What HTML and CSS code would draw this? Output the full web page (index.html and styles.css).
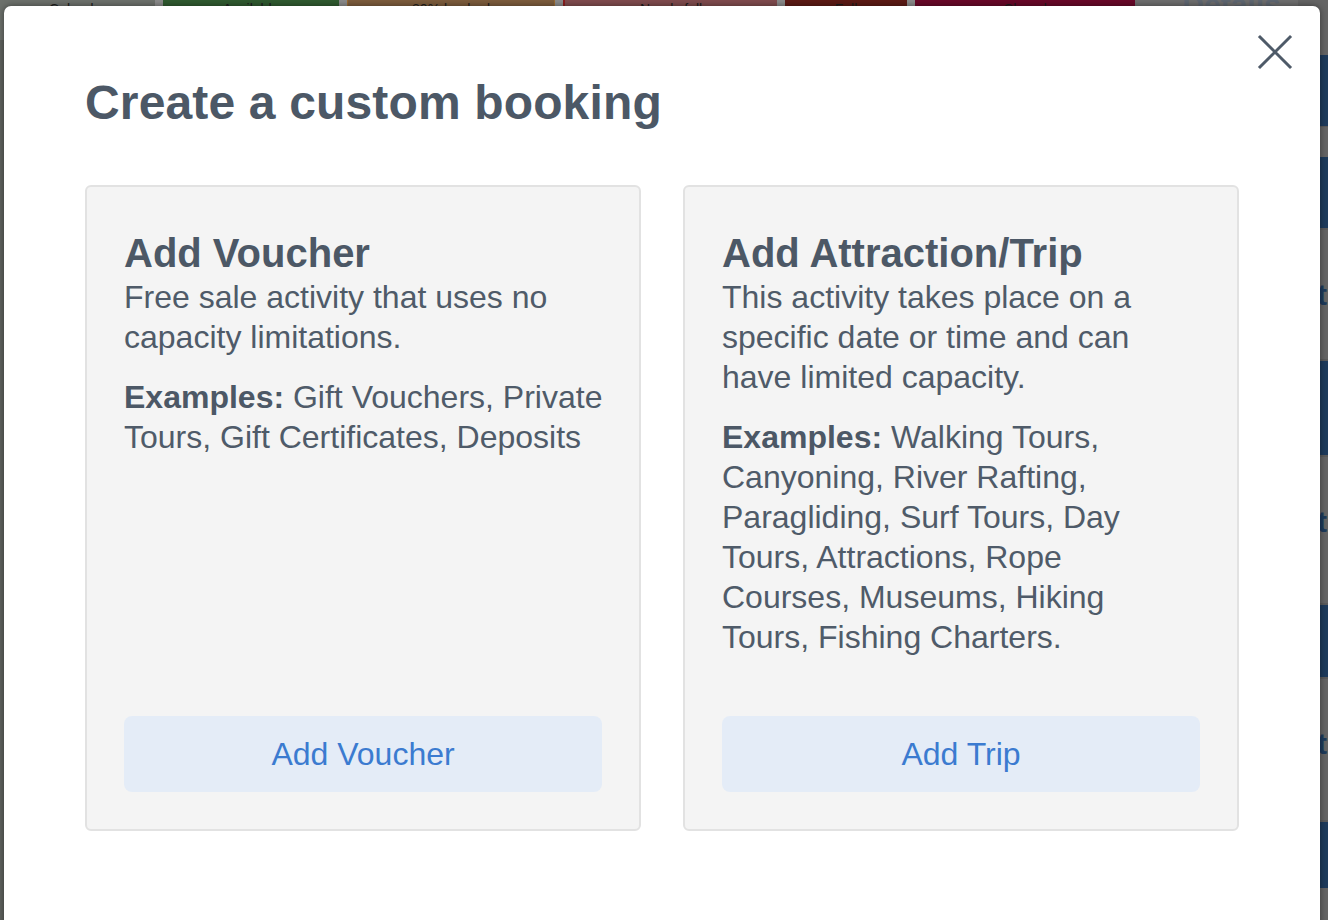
FILE: index.html
```html
<!DOCTYPE html>
<html lang="en">
<head>
<meta charset="utf-8">
<title>Create a custom booking</title>
<link rel="stylesheet" href="styles.css">
</head>
<body>
<div class="page">
  <div class="backdrop">
    <div class="tabs">
      <div class="tab t-grey">Calendar</div>
      <div class="sep"></div>
      <div class="tab t-green">Available</div>
      <div class="sep"></div>
      <div class="tab t-brown">80% booked</div>
      <div class="sep"></div>
      <div class="tab t-pink">Nearly full</div>
      <div class="sep"></div>
      <div class="tab t-red">Full</div>
      <div class="sep"></div>
      <div class="tab t-crimson">Closed</div>
      <div class="tab t-light">Details</div>
    </div>
    <div class="side">
      <div class="row r-grey" style="height:55px"></div>
      <div class="row r-blue" style="height:71px"></div>
      <div class="row r-grey r-line" style="height:31px"></div>
      <div class="row r-blue" style="height:71px"></div>
      <div class="row r-grey r-text" style="height:133px"><span>t</span></div>
      <div class="row r-blue" style="height:94px"></div>
      <div class="row r-grey r-text" style="height:150px"><span>t</span></div>
      <div class="row r-blue" style="height:72px"></div>
      <div class="row r-grey r-text" style="height:145px"><span>t</span></div>
      <div class="row r-blue" style="height:66px"></div>
      <div class="row r-grey" style="height:40px"></div>
    </div>
  </div>

  <div class="modal">
    <button class="close" aria-label="Close">
      <svg width="36" height="36" viewBox="0 0 36 36"><path d="M3 3 L33 33 M33 3 L3 33" stroke="#4e5a68" stroke-width="3" stroke-linecap="square" fill="none"/></svg>
    </button>
    <h1 class="title">Create a custom booking</h1>
    <div class="cards">
      <div class="card">
        <h2 class="card-title">Add Voucher</h2>
        <p class="card-text">Free sale activity that uses no<br>capacity limitations.</p>
        <p class="card-text examples"><b>Examples:</b> Gift Vouchers, Private<br>Tours, Gift Certificates, Deposits</p>
        <button class="card-btn">Add Voucher</button>
      </div>
      <div class="card">
        <h2 class="card-title">Add Attraction/Trip</h2>
        <p class="card-text">This activity takes place on a<br>specific date or time and can<br>have limited capacity.</p>
        <p class="card-text examples"><b>Examples:</b> Walking Tours,<br>Canyoning, River Rafting,<br>Paragliding, Surf Tours, Day<br>Tours, Attractions, Rope<br>Courses, Museums, Hiking<br>Tours, Fishing Charters.</p>
        <button class="card-btn">Add Trip</button>
      </div>
    </div>
  </div>
</div>
</body>
</html>
```

FILE: styles.css
```css
* { box-sizing: border-box; }

html, body {
  margin: 0;
  padding: 0;
  width: 1328px;
  height: 920px;
  overflow: hidden;
  background: #5e615d;
  font-family: "Liberation Sans", Arial, Helvetica, sans-serif;
}

.page {
  position: relative;
  width: 1328px;
  height: 920px;
  overflow: hidden;
}

/* dimmed page behind the modal */
.backdrop {
  position: absolute;
  inset: 0;
  background: #5f625e;
}

.tabs {
  display: flex;
  height: 40px;
  font-size: 14px;
  color: #1c1c1c;
}

.tab {
  height: 40px;
  padding-top: 1px;
  text-align: center;
  overflow: hidden;
  white-space: nowrap;
}

.sep { width: 8px; background: #8a8a8a; }

.t-grey { width: 155px; background: #6c706b; }
.t-green { width: 176px; background: #2f5a2f; }
.t-brown { width: 208px; background: #7c5c3c; border-left: 1px solid #9a6a30; border-right: 1px solid #9a6a30; }
.t-pink { width: 214px; background: #7f4b4d; border-left: 2px solid #8b1e1e; }
.t-red { width: 122px; background: #5c1a15; }
.t-crimson { width: 220px; background: #680828; }
.t-light { flex: 1; background: #6d6d6d; color: #5e6670; font-size: 30px; font-weight: bold; line-height: 10px; padding-top: 0; }

.side {
  position: absolute;
  right: 0;
  top: 0;
  width: 30px;
  display: flex;
  flex-direction: column;
}

.row { width: 30px; position: relative; }
.r-grey { background: #646464; }
.r-blue { background: #1d3a5b; }
.r-line { border-top: 1px solid #585858; }
.r-text { border-top: 2px solid #5a5a5a; border-bottom: 2px solid #5a5a5a; }
.r-text span {
  position: absolute;
  left: 19px;
  top: 50px;
  font-size: 30px;
  font-weight: bold;
  color: #1d3a5b;
  line-height: 30px;
}

/* modal */
.modal {
  position: absolute;
  left: 4px;
  top: 6px;
  width: 1316px;
  height: 960px;
  background: #ffffff;
  border-radius: 7px;
  box-shadow: 0 0 6px rgba(0, 0, 0, 0.45);
  padding: 73px 81px 0 81px;
}

.close {
  position: absolute;
  top: 28px;
  right: 27px;
  width: 36px;
  height: 36px;
  padding: 0;
  border: 0;
  background: transparent;
  cursor: pointer;
}
.close svg { display: block; }

.title {
  margin: 0;
  font-size: 48px;
  line-height: 48px;
  font-weight: bold;
  color: #4c5866;
  letter-spacing: 0.15px;
}

.cards {
  margin-top: 58px;
  display: grid;
  grid-template-columns: 556px 556px;
  column-gap: 42px;
}

.card {
  height: 646px;
  display: flex;
  flex-direction: column;
  background: #f4f4f4;
  border: 2px solid #e2e2e2;
  border-radius: 6px;
  padding: 44px 37px 37px 37px;
  color: #4c5866;
}

.card-title {
  margin: 0;
  font-size: 40px;
  line-height: 44px;
  font-weight: bold;
  color: #4c5866;
  white-space: nowrap;
}

.card-text {
  margin: 2px -30px 0 0;
  font-size: 32px;
  line-height: 40px;
  color: #4f5b69;
  white-space: nowrap;
}

.card-text.examples { margin-top: 20px; }
.card-text b { font-weight: bold; color: #4c5866; }

.card-btn {
  margin-top: auto;
  height: 76px;
  width: 100%;
  border: 0;
  border-radius: 8px;
  background: #e4ecf7;
  color: #3b7bd0;
  font-family: "Liberation Sans", Arial, Helvetica, sans-serif;
  font-size: 32px;
  cursor: pointer;
  padding: 0;
}
```
